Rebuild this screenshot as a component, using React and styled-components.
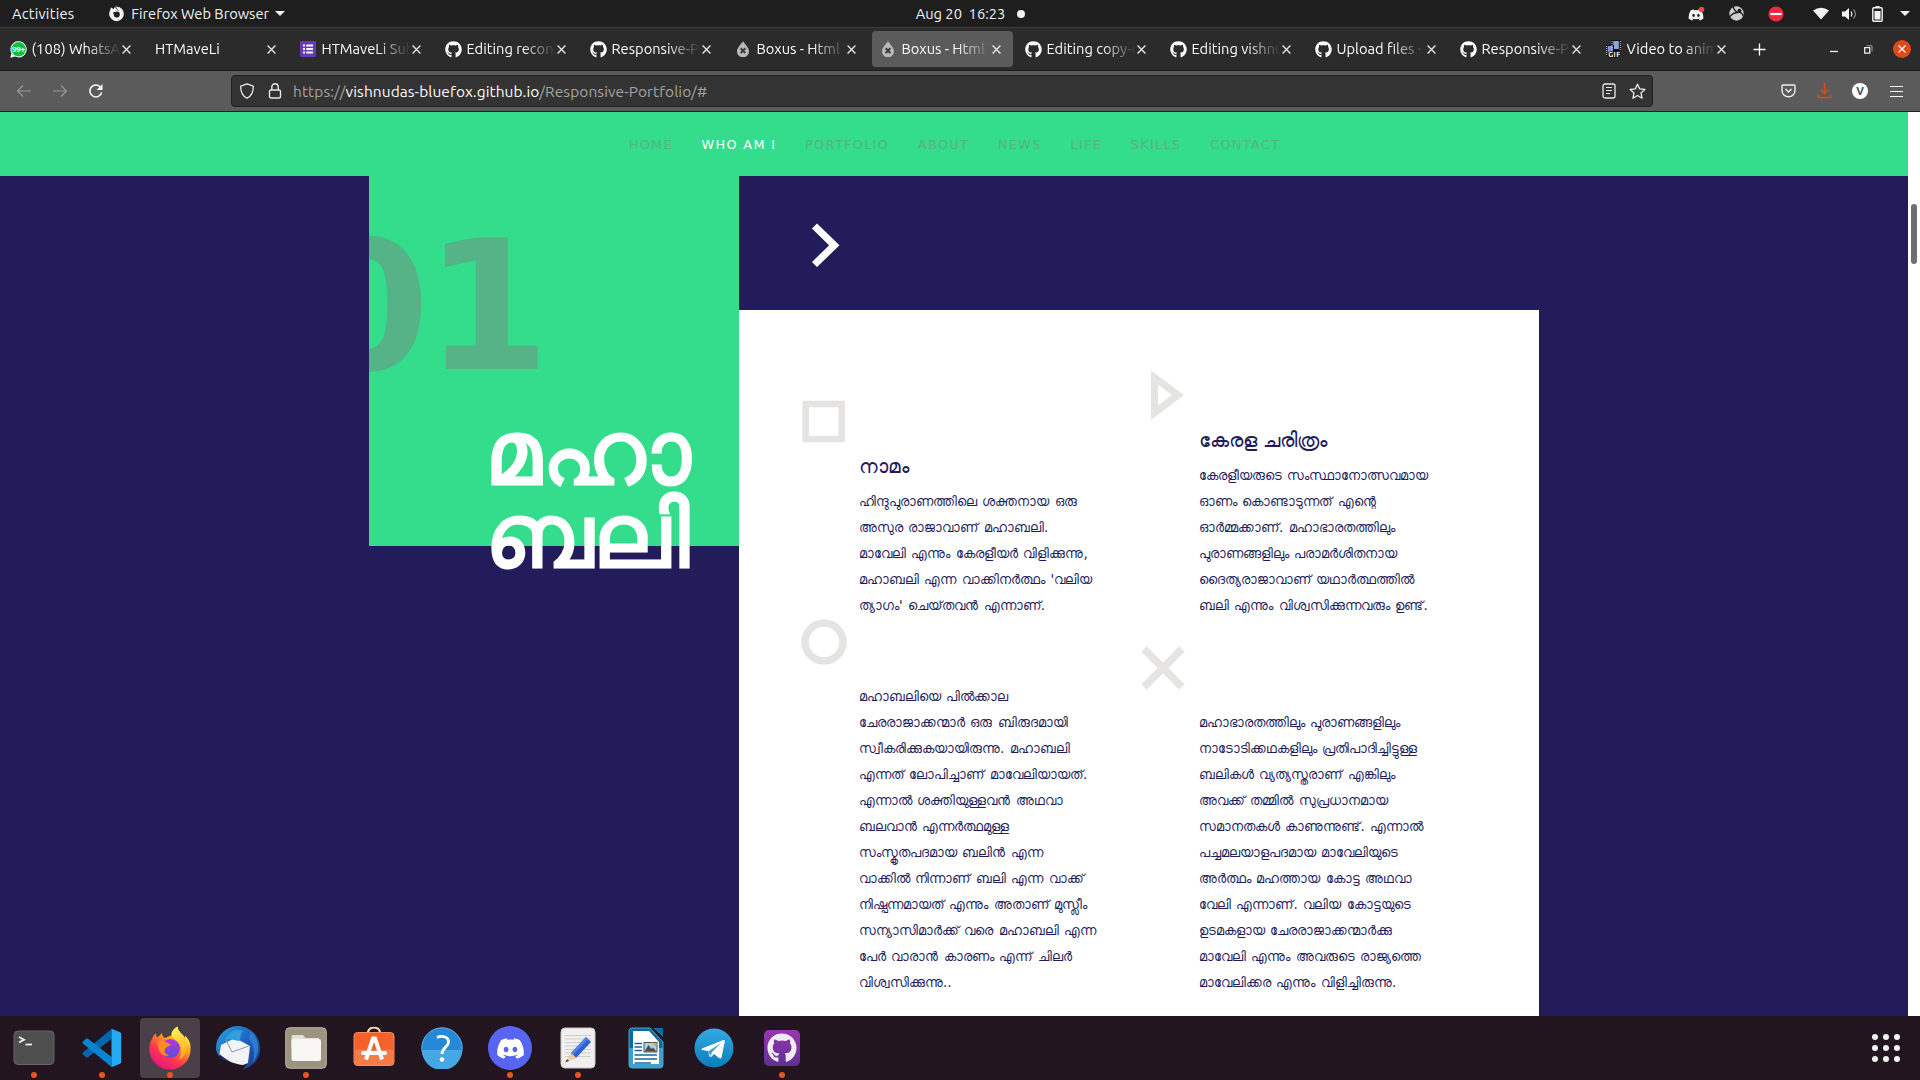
import React from "react";
import styled, { createGlobalStyle, css } from "styled-components";
import { FaGithub, FaDiscord } from "react-icons/fa";

const UI = `Ubuntu, "Noto Sans", sans-serif`;
const WEB = `"DejaVu Sans", "Noto Sans", sans-serif`;

const Global = createGlobalStyle`
  * { box-sizing: border-box; }
  body { margin: 0; overflow: hidden; background: #23151f; }
  svg { display: block; flex: none; }
`;

const Desktop = styled.div`
  width: 1920px;
  height: 1080px;
  display: flex;
  flex-direction: column;
  overflow: hidden;
  font-family: ${UI};
  color: #f2f2f2;
`;

const Center = styled.div`
  display: flex;
  align-items: center;
  justify-content: center;
`;

/* ---------- GNOME top bar ---------- */
const TopBar = styled.header`
  height: 27px;
  flex: none;
  display: grid;
  grid-template-columns: 1fr auto 1fr;
  background: #1e1e1e;
  font-size: 14.67px;
  line-height: 27px;
  white-space: pre;
`;
const TopGroup = styled.div`
  display: flex;
  align-items: center;
  justify-content: ${(p) => (p.$end ? "flex-end" : "flex-start")};
`;
const AppMenu = styled.div`
  display: flex;
  align-items: center;
  gap: 6px;
  margin-left: 34px;
`;
const Clock = styled.div`
  display: flex;
  align-items: center;
  gap: 12px;
  padding-left: 21px;
`;
const Dot = styled.i`
  width: ${(p) => p.$size}px;
  height: ${(p) => p.$size}px;
  border-radius: 50%;
  background: ${(p) => p.$color};
`;
const Caret = styled.i`
  border: 5px solid transparent;
  border-top: 5px solid #f2f2f2;
  border-bottom: 0;
`;
const Activities = styled.span`
  margin-left: 12px;
  letter-spacing: 0.22px;
`;
const Tray = styled(Center)`
  width: 20px;
  margin-right: ${(p) => p.$gap}px;
`;

/* ---------- tab strip ---------- */
const TabStrip = styled.div`
  height: 44px;
  flex: none;
  display: flex;
  align-items: center;
  gap: 4px;
  padding: 0 9px 0 2px;
  background: #2b2b2b;
  border-top: 1px solid #3d3d3d;
  border-bottom: 1px solid #1c1c1c;
`;
const Tab = styled.div`
  width: 141px;
  height: 36px;
  flex: none;
  display: flex;
  align-items: center;
  padding: 0 12px 0 8px;
  border-radius: 4px;
  background: ${(p) => (p.$active ? "#5b5b5b" : "transparent")};
`;
const Favicon = styled(Center)`
  width: 16px;
  height: 16px;
  flex: none;
  margin-right: 5.5px;
`;
const TabLabel = styled.span`
  flex: 1;
  min-width: 0;
  margin-right: 1px;
  overflow: hidden;
  white-space: nowrap;
  font-size: 14.67px;
  line-height: 24px;
  color: #fbfbfb;
  -webkit-mask-image: linear-gradient(to left, transparent 0, #000 34px);
  mask-image: linear-gradient(to left, transparent 0, #000 34px);
`;
const Spacer = styled.div`
  flex: 1;
`;
const WindowButtons = styled.div`
  display: flex;
  align-items: center;
  gap: 16px;
`;
const CloseWindow = styled(Center)`
  width: 18px;
  height: 18px;
  border-radius: 50%;
  background: #e0491a;
`;
const WinIcon = styled(Center)`
  width: 18px;
  height: 18px;
`;
const NewTab = styled(Center)`
  width: 34px;
`;

/* ---------- toolbar ---------- */
const Toolbar = styled.div`
  height: 41px;
  flex: none;
  display: flex;
  align-items: center;
  padding: 0 15px;
  background: #5b5b5b;
  border-bottom: 1px solid #222;
`;
const NavButtons = styled.div`
  width: 216px;
  display: flex;
  gap: 18px;
`;
const UrlBar = styled.div`
  width: 1422px;
  height: 32px;
  display: flex;
  align-items: center;
  padding: 0 6px;
  border: 1px solid #202020;
  border-radius: 4px;
  background: #333;
`;
const Url = styled.span`
  flex: 1;
  margin-left: 9px;
  font-size: 15.5px;
  letter-spacing: 0.07px;
  color: #a3a3a3;
  b { font-weight: 400; color: #fbfbfb; }
`;
const BarIcon = styled(Center)`
  width: 18px;
  height: 18px;
  margin-left: ${(p) => p.$ml || 0}px;
`;
const Avatar = styled(Center)`
  width: 16px;
  height: 16px;
  border-radius: 50%;
  background: #fff;
  color: #4a4a4a;
  font: 700 11px ${UI};
`;

/* ---------- page ---------- */
const Viewport = styled.div`
  height: 904px;
  flex: none;
  display: flex;
`;
const Page = styled.main`
  width: 1908px;
  display: flex;
  flex-direction: column;
  background: #221c5a;
  font-family: ${WEB};
`;
const ScrollTrack = styled.div`
  width: 12px;
  padding: 92px 3px 0;
  background: #fff;
`;
const ScrollThumb = styled.div`
  height: 60px;
  border-radius: 3px;
  background: #6f6f6f;
`;
const SiteNav = styled.nav`
  height: 64px;
  flex: none;
  display: flex;
  justify-content: center;
  gap: 28.6px;
  padding-left: 1px;
  background: #33dd8b;
  font-size: 12.8px;
  line-height: 66px;
  letter-spacing: 1.36px;
`;
const NavLink = styled.a`
  color: ${(p) => (p.$active ? "#fff" : "#56b287")};
`;
const Section = styled.section`
  flex: 1;
  min-height: 0;
  display: flex;
  padding-left: 369px;
`;
const Side = styled.div`
  width: 370px;
  height: 370px;
  flex: none;
  padding-top: 43px;
  overflow-x: clip;
  background: #33dd8b;
`;
const BigNumber = styled.div`
  margin-left: -64.5px;
  height: 192px;
  line-height: 176px;
  font-size: 180px;
  font-weight: 700;
  letter-spacing: -5px;
  color: #56b287;
`;
const Title = styled.h2`
  margin: 0 0 0 116.4px;
  font-size: 90px;
  line-height: 83px;
  font-weight: 400;
  color: #fff;
  -webkit-text-stroke: 2.8px #fff;
  white-space: nowrap;
`;
const Content = styled.div`
  width: 800px;
  display: flex;
  flex-direction: column;
`;
const ArrowRow = styled.div`
  height: 134px;
  flex: none;
  padding: 46px 0 0 71px;
`;
const Panel = styled.div`
  flex: 1;
  display: grid;
  grid-template-columns: 340px 340px;
  padding-left: 62px;
  background: #fff;
  color: #221c5a;
`;
const Column = styled.div`
  padding-top: ${(p) => p.$top}px;
`;
const Shape = styled.div`
  height: ${(p) => p.$h}px;
`;
const Heading = styled.h3`
  margin: 0 0 9px 58px;
  height: 26px;
  font-size: 19.7px;
  line-height: 26px;
  font-weight: 400;
  white-space: nowrap;
`;
const Text = styled.p`
  margin: 0 0 0 58px;
  font-size: 13.44px;
  line-height: 26px;
  word-spacing: 1.2px;
  white-space: nowrap;
`;
const Line = styled.span`
  display: block;
  height: 26px;
`;

/* ---------- dock ---------- */
const Dock = styled.footer`
  height: 64px;
  flex: none;
  display: flex;
  align-items: center;
  gap: 8px;
  padding: 0 20px 0 4px;
  background: #23151f;
`;
const DockItem = styled.div`
  width: 60px;
  height: 60px;
  display: flex;
  flex-direction: column;
  align-items: center;
  justify-content: flex-end;
  border-radius: 4px;
  ${(p) => p.$active && css`background: #4b3f48;`}
`;
const DockIcon = styled(Center)`
  width: 48px;
  height: 48px;
`;
const Bubble = styled(Center)`
  width: 44px;
  height: 44px;
  border-radius: 50%;
  background: #5865f2;
`;
const Grid9 = styled.div`
  display: grid;
  grid-template-columns: repeat(3, 6px);
  gap: 5px;
`;

const X = ({ s = 8, c = "#e8e8e8", w = 1.2 }) => (
  <svg width={s} height={s} viewBox="0 0 8 8"><path d="M.5.5l7 7M7.5.5l-7 7" stroke={c} strokeWidth={w} /></svg>
);
const WhatsApp = () => (
  <svg width="17" height="17" viewBox="0 0 17 17">
    <path d="M.3 16.7l1.2-4.4A8.1 8.1 0 1 1 5 15.6z" fill="#fff" />
    <circle cx="8.6" cy="8.3" r="7.2" fill="#0fc143" />
    <text x="8.5" y="11.4" fontSize="8" fontWeight="700" fontFamily="Ubuntu, Noto Sans, sans-serif" textAnchor="middle" fill="#fff" textLength="13">99+</text>
  </svg>
);
const Forms = () => (
  <svg width="16" height="16" viewBox="0 0 16 16">
    <rect width="16" height="16" rx="1" fill="#673ab7" />
    <path d="M3 4.5h2M3 8h2M3 11.5h2M6.3 4.5H13M6.3 8H13M6.3 11.5H13" stroke="#fff" strokeWidth="1.8" />
  </svg>
);
const Drop = () => (
  <svg width="16" height="16" viewBox="0 0 16 16">
    <path d="M8 0C9.5 3 14 6.500 14 10.300A5.800 5.800 0 0 1 2 10.300C2 6.500 6.500 3 8 0z" fill="#b9b9b9" />
    <path d="M5.700 7.300l4.600 4.800M10.300 7.300l-4.600 4.800" stroke="#3a3a3a" strokeWidth="2" />
  </svg>
);
const Gif = () => (
  <svg width="16" height="18" viewBox="0 0 16 18">
    <rect x="6" width="10" height="11" fill="#111" />
    <rect x="8.300" y="1" width="5.500" height="8" fill="#8fa3e0" />
    <rect x="1" y="5" width="8" height="11" fill="#111" />
    <rect x="2.800" y="6" width="5" height="6.500" fill="#8296d8" />
    <path d="M7 1v10M15.300 1v10M1.700 6v9" stroke="#ddd" strokeDasharray="1 1" />
    <text x="3.200" y="17" fontSize="7" fontWeight="700" fontFamily="Ubuntu, Noto Sans, sans-serif" fill="#fff" stroke="#111" strokeWidth="1.600" paintOrder="stroke" textLength="12">GIF</text>
  </svg>
);
const Git = () => <FaGithub size={17} color="#fff" />;

const tabs = [
  { icon: WhatsApp, label: "(108) WhatsApp" },
  { label: "HTMaveLi" },
  { icon: Forms, label: "HTMaveLi Submission" },
  { icon: Git, label: "Editing reconnect" },
  { icon: Git, label: "Responsive-Portfolio" },
  { icon: Drop, label: "Boxus - Html Template" },
  { icon: Drop, label: "Boxus - Html Template", active: true },
  { icon: Git, label: "Editing copy-code" },
  { icon: Git, label: "Editing vishnudas" },
  { icon: Git, label: "Upload files · vishnudas" },
  { icon: Git, label: "Responsive-Portfolio" },
  { icon: Gif, label: "Video to animated GIF" },
];

const nav = ["HOME", "WHO AM I", "PORTFOLIO", "ABOUT", "NEWS", "LIFE", "SKILLS", "CONTACT"];

const name = [
  "ഹിന്ദുപുരാണത്തിലെ ശക്തനായ ഒരു",
  "അസുര രാജാവാണ് മഹാബലി.",
  "മാവേലി എന്നും കേരളീയർ വിളിക്കുന്നു,",
  "മഹാബലി എന്ന വാക്കിനർത്ഥം 'വലിയ",
  "ത്യാഗം' ചെയ്\u200cതവൻ എന്നാണ്.",
];
const title = [
  "മഹാബലിയെ പിൽക്കാല",
  "ചേരരാജാക്കന്മാർ ഒരു ബിരുദമായി",
  "സ്വീകരിക്കുകയായിരുന്നു. മഹാബലി",
  "എന്നത് ലോപിച്ചാണ് മാവേലിയായത്.",
  "എന്നാൽ ശക്തിയുള്ളവൻ അഥവാ",
  "ബലവാൻ എന്നർത്ഥമുള്ള",
  "സംസ്കൃതപദമായ ബലിൻ എന്ന",
  "വാക്കിൽ നിന്നാണ് ബലി എന്ന വാക്ക്",
  "നിഷ്പന്നമായത് എന്നും അതാണ് മുസ്ലീം",
  "സന്യാസിമാർക്ക് വരെ മഹാബലി എന്ന",
  "പേർ വാരാൻ കാരണം എന്ന് ചിലർ",
  "വിശ്വസിക്കുന്നു..",
];
const history = [
  "കേരളീയരുടെ സംസ്ഥാനോത്സവമായ",
  "ഓണം കൊണ്ടാടുന്നത് എന്റെ",
  "ഓർമ്മക്കാണ്. മഹാഭാരതത്തിലും",
  "പുരാണങ്ങളിലും പരാമർശിതനായ",
  "ദൈത്യരാജാവാണ് യഥാർത്ഥത്തിൽ",
  "ബലി എന്നും വിശ്വസിക്കുന്നവരും ഉണ്ട്.",
];
const epics = [
  "മഹാഭാരതത്തിലും പുരാണങ്ങളിലും",
  "നാടോടിക്കഥകളിലും പ്രതിപാദിച്ചിട്ടുള്ള",
  "ബലികൾ വ്യത്യസ്തരാണ് എങ്കിലും",
  "അവക്ക് തമ്മിൽ സുപ്രധാനമായ",
  "സമാനതകൾ കാണുന്നുണ്ട്. എന്നാൽ",
  "പച്ചമലയാളപദമായ മാവേലിയുടെ",
  "അർത്ഥം മഹത്തായ കോട്ട അഥവാ",
  "വേലി എന്നാണ്. വലിയ കോട്ടയുടെ",
  "ഉടമകളായ ചേരരാജാക്കന്മാർക്കു",
  "മാവേലി എന്നും അവരുടെ രാജ്യത്തെ",
  "മാവേലിക്കര എന്നും വിളിച്ചിരുന്നു.",
];
const Lines = ({ lines }) => <Text>{lines.map((l) => <Line key={l}>{l}</Line>)}</Text>;

/* ---------- dock drawings ---------- */
const Terminal = () => (
  <svg width="42" height="36" viewBox="0 0 42 36">
    <rect x="1" y="1" width="40" height="33.500" rx="4" fill="#4e4e4e" stroke="#656565" />
    <path d="M6 7l5 2.700L6 12.500" fill="none" stroke="#eee" strokeWidth="1.800" />
    <path d="M12.500 14.500H19" stroke="#eee" strokeWidth="1.800" />
  </svg>
);
const Code = () => (
  <svg width="40" height="40" viewBox="0 0 40 40">
    <path d="M1 26.500l3 2.800a1.500 1.500 0 0 0 2 0L29.500 11V1L1.200 24.200a1.600 1.600 0 0 0-.2 2.300z" fill="#0066ad" />
    <path d="M1 13.500L4 10.700a1.500 1.500 0 0 1 2 0L29.500 29v10L1.200 15.800a1.600 1.600 0 0 1-.2-2.300z" fill="#0a84d0" />
    <path d="M29.500.8L38 4.300a2 2 0 0 1 1.200 1.900v27.600a2 2 0 0 1-1.200 1.900l-8.500 3.500z" fill="#25aaf4" />
  </svg>
);
const Firefox = () => (
  <svg width="44" height="44" viewBox="0 0 44 44">
    <defs>
      <linearGradient id="ffa" x1=".8" y1=".1" x2=".25" y2=".95">
        <stop offset="0" stopColor="#fff44f" /><stop offset=".35" stopColor="#ff9a1f" /><stop offset=".65" stopColor="#ff3b4e" /><stop offset="1" stopColor="#e5157d" />
      </linearGradient>
      <linearGradient id="ffb" x1="0" y1="0" x2="0" y2="1">
        <stop offset="0" stopColor="#b833e1" /><stop offset="1" stopColor="#5a4fd8" />
      </linearGradient>
      <linearGradient id="ffc" x1=".5" y1="0" x2=".7" y2="1">
        <stop offset="0" stopColor="#fff44f" /><stop offset="1" stopColor="#ffa01e" />
      </linearGradient>
    </defs>
    <path d="M4 13C5 10 6.500 8.500 8 7.500C8 9.500 8.500 10.500 9.500 11.500L14 7C14 9.500 15 11 17 12L24 9C24 5 27 2 29.500.5C29.500 4 32 6 35 9L37 12V9.500C41 13 43 18 42.600 23A20.600 20.600 0 0 1 1.400 23C1.200 19 2 16 4 13z" fill="url(#ffa)" />
    <path d="M29.500.5C29.500 5 34 8 37 13C41 21 38 30 31 34C35 27 34 20 30 16C26 12 23 11 23.500 7C24.500 4 27 2 29.500.5z" fill="url(#ffc)" />
    <circle cx="22.500" cy="22.500" r="9.500" fill="url(#ffb)" />
    <path d="M9 16C13 14 17 15 20 17L23 18.500C22 20.500 19 20 17.500 22C15.500 24.500 17 28 21 29.500C16 31 11 27 10.500 22z" fill="#ff8a22" />
  </svg>
);
const Thunderbird = () => (
  <svg width="46" height="46" viewBox="0 0 46 46">
    <defs>
      <linearGradient id="tb" x1="0" y1="0" x2="1" y2="1"><stop offset="0" stopColor="#2ca6e0" /><stop offset=".5" stopColor="#1d62c0" /><stop offset="1" stopColor="#1b3a86" /></linearGradient>
    </defs>
    <path d="M1 23C1 12 9 4 18 1.500L23 1C36 2 45 11 45 24C45 34 38 42 27 44.500C31 41 33 38 34 34L4 31C2 28 1 26 1 23z" fill="url(#tb)" />
    <path d="M6 20L20 13L35 21L33 38L28 40C18 39 8 34 4.500 29z" fill="#f1f3f6" />
    <path d="M11 15L17 27L34 21" fill="none" stroke="#8f98a5" strokeWidth="1" />
    <path d="M10 15C13 7 20 3 28 6C24 9 27 14 24 16C19 15 14 13 10 15z" fill="#2f9fdd" />
    <path d="M4 29L14 36C12 36 9 35 7 34z" fill="#16357c" />
    <path d="M36 6C44 14 46 26 38 38C40 28 39 20 34 14z" fill="#2b7bd0" />
  </svg>
);
const Files = () => (
  <svg width="42" height="42" viewBox="0 0 42 42">
    <rect x=".7" y=".7" width="40.600" height="40.600" rx="4" fill="#9d9480" stroke="#b9b2a0" />
    <path d="M6.500 9.500A1.700 1.700 0 0 1 8.200 8H18l2.500 3H34v10H6.500z" fill="#e2dfd6" />
    <rect x="6.500" y="12" width="29.500" height="22" rx="2" fill="#f8f7f5" />
  </svg>
);
const Software = () => (
  <svg width="42" height="42" viewBox="0 0 42 42">
    <path d="M14.500 7.500C15 2 17.500 .5 21 .5s6 1.500 6.500 7" fill="none" stroke="#f3d9b0" strokeWidth="2" />
    <rect x="1" y="5.500" width="40" height="33" rx="3.500" fill="#f2622a" stroke="#f98a5c" />
    <rect x="1.500" y="22.500" width="39" height="15.500" rx="3" fill="#f57c47" />
    <path d="M13 32.500L20 11.500H22L29 32.500" fill="none" stroke="#fff" strokeWidth="4" />
    <path d="M10 26H32" stroke="#fff" strokeWidth="4" strokeLinecap="round" />
  </svg>
);
const Help = () => (
  <svg width="42" height="42" viewBox="0 0 42 42">
    <circle cx="21" cy="21" r="20.200" fill="#2788d8" stroke="#5bb4ea" />
    <path d="M1 23H41A20 20 0 0 1 1 23z" fill="#45a7e4" />
    <path d="M16 10.500C20 8.500 27.500 9 27.500 15C27.500 20 21 20.500 21 27" fill="none" stroke="#fff" strokeWidth="2.800" />
    <circle cx="21" cy="32.500" r="2.300" fill="#fff" />
  </svg>
);
const Editor = () => (
  <svg width="36" height="42" viewBox="0 0 36 42">
    <rect x="1" y="1" width="34" height="40" rx="4" fill="#f1f0ee" stroke="#c9c7c4" />
    <path d="M5 8.500H31M5 12H31M5 15.500H31M5 19H31M5 22.500H31M5 26H31M5 29.500H31" stroke="#cfcecb" />
    <path d="M11 26L26 10L31 15L16 31z" fill="#2f62d6" />
    <path d="M11 26L26 10L28 12L13 28z" fill="#5184ea" />
    <path d="M11 26L16 31L6 35z" fill="#f2c9a0" />
    <path d="M7.200 32L9 34L5 35.500z" fill="#444" />
  </svg>
);
const Writer = () => (
  <svg width="36" height="42" viewBox="0 0 36 42">
    <path d="M3.500 1H22L35 15V38a3 3 0 0 1-3 3H4a3 3 0 0 1-3-3V4a3 3 0 0 1 2.500-3z" fill="#0b6ca0" stroke="#4aa6d2" />
    <path d="M1 21H35V38a3 3 0 0 1-3 3H4a3 3 0 0 1-3-3z" fill="#3f9fcd" />
    <path d="M5 4H21L31 15V37H5z" fill="#fff" />
    <path d="M25 1H35V10z" fill="#0d6ea3" />
    <path d="M6.500 16.500H14M6.500 20H14M6.500 23.500H14M6.500 28H29M6.500 32H29M6.500 36H23" stroke="#16699c" strokeWidth="1.600" />
    <rect x="16" y="15.500" width="13" height="9.500" fill="#a9d3ea" stroke="#555" />
    <path d="M16.500 24.500L20.500 18L23.500 22L25 20.500L28.500 24.500z" fill="#4d4d4d" />
    <circle cx="27" cy="17.500" r="1.600" fill="#f6a623" />
  </svg>
);
const Telegram = () => (
  <svg width="40" height="40" viewBox="0 0 40 40">
    <defs><linearGradient id="tg" x1="0" y1="0" x2="0" y2="1"><stop offset="0" stopColor="#35a9e2" /><stop offset="1" stopColor="#0a7dbb" /></linearGradient></defs>
    <circle cx="20" cy="20" r="19.500" fill="url(#tg)" />
    <path d="M8 20.500L29.500 12C30.500 11.800 31 12.500 30.800 13.500L27.500 29.500C27 30.700 26 30.500 25 30L20 26L17 29C16.500 29.300 15.800 29 15.500 28.300L14 23L8.300 22C7.300 21.600 7.200 21 8 20.500z" fill="#fff" />
    <path d="M14 23.500L27 15L18 24L16.800 28z" fill="#3b9fd2" />
  </svg>
);
const GitHubApp = () => (
  <svg width="38" height="38" viewBox="0 0 38 38">
    <defs><linearGradient id="gh" x1="0" y1="0" x2="0" y2="1"><stop offset="0" stopColor="#9a35b0" /><stop offset="1" stopColor="#5f3192" /></linearGradient></defs>
    <rect x="1" y="1" width="36" height="36" rx="5" fill="url(#gh)" />
    <g transform="translate(4 4)"><FaGithub size={30} color="#f1edf5" /></g>
  </svg>
);

const dock = [
  { icon: <Terminal />, on: true },
  { icon: <Code />, on: true },
  { icon: <Firefox />, on: true, active: true },
  { icon: <Thunderbird /> },
  { icon: <Files />, on: true },
  { icon: <Software /> },
  { icon: <Help /> },
  { icon: <Bubble><FaDiscord size={29} color="#fff" /></Bubble>, on: true },
  { icon: <Editor />, on: true },
  { icon: <Writer /> },
  { icon: <Telegram /> },
  { icon: <GitHubApp />, on: true },
];

export default function App() {
  return (
    <Desktop>
      <Global />
      <TopBar>
        <TopGroup>
          <Activities>Activities</Activities>
          <AppMenu>
            <svg width="17" height="17" viewBox="0 0 17 17">
              <path d="M8.500 1.500A7.300 7.300 0 1 1 2 5.500L3 2.500L5.500 4L8 .5z" fill="#f2f2f2" />
              <path d="M5 7.500L9 6.500A3 3 0 1 1 5.800 9.500z" fill="#1e1e1e" />
              <path d="M8 .5C7 3 9 4 10 5.500" stroke="#1e1e1e" fill="none" />
            </svg>
            <span>Firefox Web Browser</span>
            <Caret />
          </AppMenu>
        </TopGroup>
        <Clock><span>Aug 20  16:23</span><Dot $size={8} $color="#f2f2f2" /></Clock>
        <TopGroup $end>
          <Tray $gap={20}>
            <svg width="17" height="16" viewBox="0 0 17 16">
              <g transform="translate(0 1)"><FaDiscord size={16} color="#f2f2f2" /></g>
              <circle cx="13.500" cy="3.500" r="2.800" fill="#f04747" />
            </svg>
          </Tray>
          <Tray $gap={20}>
            <svg width="15" height="15" viewBox="0 0 15 15">
              <circle cx="7.500" cy="7.500" r="7.200" fill="#cfcfcf" />
              <path d="M4.500 1C4.500 4.500 7 5.500 9 6.500C12 6 13.500 7.500 14 10M9 6.500C6 6.500 3 8 1 10.500" stroke="#1e1e1e" strokeWidth="1.300" fill="none" />
              <path d="M10.500 2.800a2 2 0 1 1-.1 0z" fill="#1e1e1e" />
            </svg>
          </Tray>
          <Tray $gap={25}>
            <svg width="16" height="16" viewBox="0 0 16 16"><circle cx="8" cy="8" r="7.600" fill="#f5273f" /><path d="M2.500 8h11" stroke="#fff" strokeWidth="2.200" /></svg>
          </Tray>
          <Tray $gap={8}>
            <svg width="16" height="13" viewBox="0 0 16 13"><path d="M0 3.500Q8-2 16 3.500L8 12.500z" fill="#f2f2f2" /></svg>
          </Tray>
          <Tray $gap={8}>
            <svg width="15" height="14" viewBox="0 0 15 14"><path d="M0 4.500h3L7 1v12L3 9.500H0z" fill="#f2f2f2" /><path d="M9 4.500q1.800 2.500 0 5" stroke="#f2f2f2" fill="none" strokeWidth="1.200" /><path d="M11.500 2.500q4 4.500 0 9" stroke="#8a8a8a" fill="none" strokeWidth="1.200" /></svg>
          </Tray>
          <Tray $gap={8}>
            <svg width="11" height="16" viewBox="0 0 11 16"><path d="M3.500 0h4v2h-4z" fill="#f2f2f2" /><rect x=".8" y="1.700" width="9.400" height="13.500" rx="1" fill="none" stroke="#f2f2f2" strokeWidth="1.400" /><path d="M2.500 5h6v8.500h-6z" fill="#f2f2f2" /></svg>
          </Tray>
          <Tray $gap={5}><Caret /></Tray>
        </TopGroup>
      </TopBar>

      <TabStrip>
        {tabs.map((t, i) => (
          <Tab key={i} $active={t.active}>
            {t.icon && <Favicon><t.icon /></Favicon>}
            <TabLabel>{t.label}</TabLabel>
            <X s={9} />
          </Tab>
        ))}
        <NewTab><svg width="13" height="13" viewBox="0 0 13 13"><path d="M6.500.5v12M.5 6.500h12" stroke="#fff" strokeWidth="1.300" /></svg></NewTab>
        <Spacer />
        <WindowButtons>
          <WinIcon><svg width="8" height="8" viewBox="0 0 8 8"><path d="M0 6.500h8" stroke="#eee" strokeWidth="1.300" /></svg></WinIcon>
          <WinIcon><svg width="9" height="9" viewBox="0 0 9 9"><path d="M.7 2.700h5v5.500h-5z" fill="none" stroke="#eee" strokeWidth="1.300" /><path d="M2.500.7h5.500v6" fill="none" stroke="#999" /></svg></WinIcon>
          <CloseWindow><X s={8} c="#fff" /></CloseWindow>
        </WindowButtons>
      </TabStrip>

      <Toolbar>
        <NavButtons>
          <BarIcon><svg width="16" height="14" viewBox="0 0 16 14"><path d="M15 7H1.500M7 1.500L1.500 7L7 12.500" fill="none" stroke="#9a9a9a" strokeWidth="1.200" /></svg></BarIcon>
          <BarIcon><svg width="16" height="14" viewBox="0 0 16 14"><path d="M1 7h13.500M9 1.500L14.500 7L9 12.500" fill="none" stroke="#9a9a9a" strokeWidth="1.200" /></svg></BarIcon>
          <BarIcon><svg width="16" height="16" viewBox="0 0 16 16"><path d="M13.700 9.500A6 6 0 1 1 12.200 3.800" fill="none" stroke="#fbfbfb" strokeWidth="1.500" /><path d="M14.500 1v6h-6z" fill="#fbfbfb" /></svg></BarIcon>
        </NavButtons>
        <UrlBar>
          <BarIcon><svg width="16" height="16" viewBox="0 0 16 16"><path d="M8 .8L14.300 3.200C14.500 9 12.500 13 8 15.200C3.500 13 1.500 9 1.700 3.200z" fill="none" stroke="#e8e8e8" strokeWidth="1.300" strokeLinejoin="round" /></svg></BarIcon>
          <BarIcon $ml={10}><svg width="14" height="16" viewBox="0 0 14 16"><rect x="1.500" y="7" width="11" height="8" rx="1.500" fill="none" stroke="#e8e8e8" strokeWidth="1.400" /><path d="M3.800 7V4a3.200 3.200 0 0 1 6.400 0V7" fill="none" stroke="#e8e8e8" strokeWidth="1.400" /></svg></BarIcon>
          <Url>https://<b>vishnudas-bluefox.github.io</b>/Responsive-Portfolio/#</Url>
          <BarIcon><svg width="14" height="16" viewBox="0 0 14 16"><rect x="1" y="1" width="12" height="14" rx="2" fill="none" stroke="#e8e8e8" strokeWidth="1.300" /><path d="M4 4.500h6M4 7.500h6M4 10.500h4" stroke="#e8e8e8" strokeWidth="1.200" /></svg></BarIcon>
          <BarIcon $ml={10}><svg width="17" height="17" viewBox="0 0 17 17"><path d="M8.500 1.200l2.200 4.700 5.200.6-3.900 3.500 1.100 5.200-4.600-2.700-4.600 2.700 1.100-5.200L1.100 6.500l5.200-.6z" fill="none" stroke="#e8e8e8" strokeWidth="1.300" strokeLinejoin="round" /></svg></BarIcon>
        </UrlBar>
        <Spacer />
        <BarIcon><svg width="15" height="14" viewBox="0 0 15 14"><path d="M2 1h11a1 1 0 0 1 1 1v4.500a6.500 6.300 0 0 1-13 0V2a1 1 0 0 1 1-1z" fill="none" stroke="#f0f0f0" strokeWidth="1.400" /><path d="M4.500 5l3 3 3-3" fill="none" stroke="#f0f0f0" strokeWidth="1.400" /></svg></BarIcon>
        <BarIcon $ml={18}><svg width="15" height="16" viewBox="0 0 15 16"><path d="M7.500 0v10.500M3.500 6.500l4 4 4-4M1 11.500v3h13v-3" fill="none" stroke="#e0491a" strokeWidth="1.500" /></svg></BarIcon>
        <BarIcon $ml={18}><Avatar>V</Avatar></BarIcon>
        <BarIcon $ml={18}><svg width="13" height="11" viewBox="0 0 13 11"><path d="M0 .5h13M0 5.500h13M0 10.500h13" stroke="#fbfbfb" strokeWidth="1.200" /></svg></BarIcon>
      </Toolbar>

      <Viewport>
        <Page>
          <SiteNav>{nav.map((n) => <NavLink key={n} $active={n === "WHO AM I"}>{n}</NavLink>)}</SiteNav>
          <Section>
            <Side>
              <BigNumber>01</BigNumber>
              <Title>മഹാ<br />ബലി</Title>
            </Side>
            <Content>
              <ArrowRow>
                <svg width="32" height="47" viewBox="0 0 32 47"><path d="M4.500 4L24.300 23.300L4.500 42.500" fill="none" stroke="#fff" strokeWidth="7.200" /></svg>
              </ArrowRow>
              <Panel>
                <Column $top={90}>
                  <Shape $h={54}>
                    <svg width="46" height="43" viewBox="0 0 46 43"><rect x="4.700" y="4" width="36" height="35" fill="none" stroke="#e5e4e2" strokeWidth="6.500" /></svg>
                  </Shape>
                  <Heading>നാമം</Heading>
                  <Lines lines={name} />
                  <Shape $h={65}>
                    <svg width="46" height="47" viewBox="0 0 46 47"><circle cx="23" cy="23" r="19" fill="none" stroke="#e5e4e2" strokeWidth="7.500" /></svg>
                  </Shape>
                  <Lines lines={title} />
                </Column>
                <Column $top={60}>
                  <Shape $h={58}>
                    <svg width="46" height="50" viewBox="0 0 46 50"><path d="M10 .5L43 25L10 50zM17 14.500V35.500L31 25z" fill="#e5e4e2" fillRule="evenodd" /></svg>
                  </Shape>
                  <Heading>കേരള ചരിത്രം</Heading>
                  <Lines lines={history} />
                  <Shape $h={91}>
                    <svg width="46" height="72" viewBox="0 0 46 72"><path d="M3 30L41 68M41 30L3 68" stroke="#e5e4e2" strokeWidth="7.500" /></svg>
                  </Shape>
                  <Lines lines={epics} />
                </Column>
              </Panel>
            </Content>
          </Section>
        </Page>
        <ScrollTrack><ScrollThumb /></ScrollTrack>
      </Viewport>

      <Dock>
        {dock.map((d, i) => (
          <DockItem key={i} $active={d.active}>
            <DockIcon>{d.icon}</DockIcon>
            <Dot $size={6} $color={d.on ? "#e95420" : "transparent"} />
          </DockItem>
        ))}
        <Spacer />
        <Grid9>{Array.from({ length: 9 }, (_, i) => <Dot key={i} $size={6} $color="#f2f2f2" />)}</Grid9>
      </Dock>
    </Desktop>
  );
}
